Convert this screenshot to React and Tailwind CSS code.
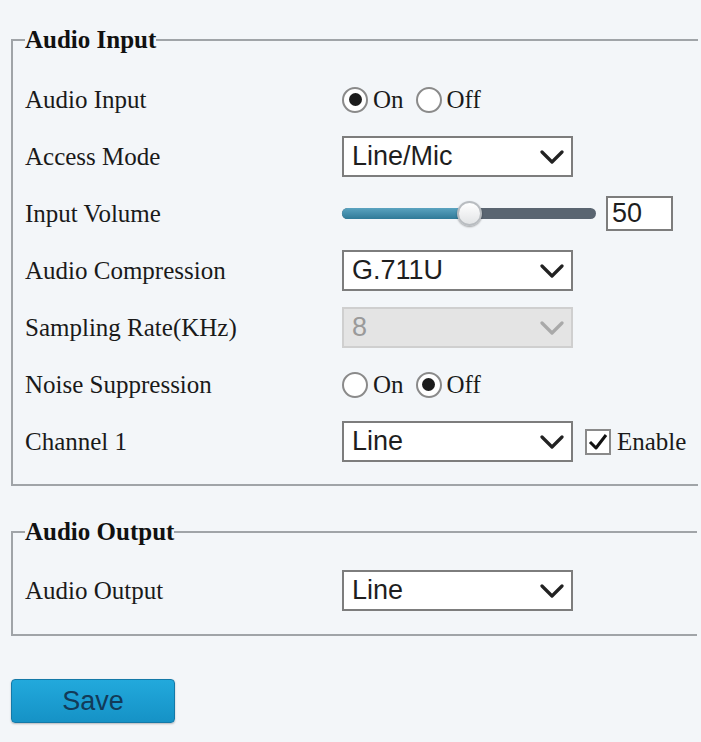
import React from "react";

const serif = { fontFamily: '"Liberation Serif", "Times New Roman", serif' };

function Chevron({ disabled }) {
  return (
    <svg width="24" height="14" viewBox="0 0 24 14" className="shrink-0">
      <path
        d="M2 2 L12 12 L22 2"
        fill="none"
        stroke={disabled ? "#a9a9a9" : "#222"}
        strokeWidth="3.2"
        strokeLinecap="round"
        strokeLinejoin="round"
      />
    </svg>
  );
}

function Select({ value, disabled }) {
  return (
    <div
      className={
        "flex items-center justify-between w-[231px] h-[41px] pl-[8px] pr-[7px] border-2 " +
        (disabled ? "bg-[#e4e4e4] border-[#cfcfcf] text-[#9a9a9a]" : "bg-white border-[#7d7d7d] text-[#1e1e1e]")
      }
      style={{ fontFamily: '"Liberation Sans", Arial, sans-serif' }}
    >
      <span className="text-[27px] leading-none">{value}</span>
      <Chevron disabled={disabled} />
    </div>
  );
}

function Radio({ checked }) {
  return (
    <span className="flex items-center justify-center w-[26px] h-[26px] rounded-full border-2 border-[#8a8a8a] bg-white shrink-0">
      {checked && <span className="w-[13px] h-[13px] rounded-full bg-[#1c1c1c]" />}
    </span>
  );
}

function OnOff({ on }) {
  return (
    <div className="flex items-center text-[25px] text-[#1a1a1a]" style={serif}>
      <Radio checked={on} />
      <span className="ml-[5px] mr-[12px]">On</span>
      <Radio checked={!on} />
      <span className="ml-[5px]">Off</span>
    </div>
  );
}

function Slider({ value }) {
  const pct = value / 100;
  return (
    <div className="flex items-center">
      <div className="relative w-[254px] h-[11px] rounded-full bg-[#5a6571]">
        <div
          className="h-full rounded-full bg-gradient-to-b from-[#5aa3c0] to-[#2f7a98]"
          style={{ width: `${pct * 254}px` }}
        />
        <div
          className="absolute top-[-7px] w-[25px] h-[25px] rounded-full bg-gradient-to-b from-white to-[#e2e4e6] border-2 border-[#b8bcc0] shadow-[0_1px_2px_rgba(0,0,0,0.35)]"
          style={{ left: `${pct * 254 - 12}px` }}
        />
      </div>
      <div
        className="ml-[10px] w-[67px] h-[35px] border-2 border-[#7d7d7d] bg-white flex items-center pl-[4px] text-[27px] text-[#1e1e1e] leading-none"
        style={{ fontFamily: '"Liberation Sans", Arial, sans-serif' }}
      >
        {value}
      </div>
    </div>
  );
}

function Row({ label, children }) {
  return (
    <div className="flex items-center h-[57px]">
      <div className="w-[317px] text-[25px] text-[#1a1a1a]" style={serif}>
        {label}
      </div>
      {children}
    </div>
  );
}

function Group({ title, className, children }) {
  return (
    <fieldset className={"w-[686px] border-2 border-r-0 border-[#a0a4a8] px-[12px] m-0 " + className}>
      <legend className="text-[25px] font-bold leading-[30px] text-[#111] px-0" style={serif}>
        {title}
      </legend>
      {children}
    </fieldset>
  );
}

export default function App() {
  return (
    <div className="w-[701px] h-[742px] bg-[#f3f6f9] pt-[25px] pl-[11px] overflow-hidden">
      <Group title="Audio Input" className="pt-[16px] pb-[14px]">
        <Row label="Audio Input">
          <OnOff on />
        </Row>
        <Row label="Access Mode">
          <Select value="Line/Mic" />
        </Row>
        <Row label="Input Volume">
          <Slider value={50} />
        </Row>
        <Row label="Audio Compression">
          <Select value="G.711U" />
        </Row>
        <Row label="Sampling Rate(KHz)">
          <Select value="8" disabled />
        </Row>
        <Row label="Noise Suppression">
          <OnOff on={false} />
        </Row>
        <Row label="Channel 1">
          <Select value="Line" />
          <div className="flex items-center ml-[12px]">
            <span className="w-[26px] h-[26px] border-2 border-[#8a8a8a] bg-white flex items-center justify-center">
              <svg width="20" height="18" viewBox="0 0 20 18">
                <path d="M2 9 L8 15 L18 2" fill="none" stroke="#111" strokeWidth="3" strokeLinejoin="round" />
              </svg>
            </span>
            <span className="ml-[6px] text-[25px] text-[#1a1a1a]" style={serif}>
              Enable
            </span>
          </div>
        </Row>
      </Group>

      <Group title="Audio Output" className="mt-[31px] pt-[15px] pb-[15px]">
        <Row label="Audio Output">
          <Select value="Line" />
        </Row>
      </Group>

      <button
        className="mt-[43px] w-[164px] h-[44px] rounded-[4px] border border-[#1479a8] bg-gradient-to-b from-[#22a9dc] to-[#1592c6] text-[27px] text-[#123a58] shadow-[0_1px_2px_rgba(0,0,0,0.25)]"
        style={{ fontFamily: '"Liberation Sans", Arial, sans-serif' }}
      >
        Save
      </button>
    </div>
  );
}
